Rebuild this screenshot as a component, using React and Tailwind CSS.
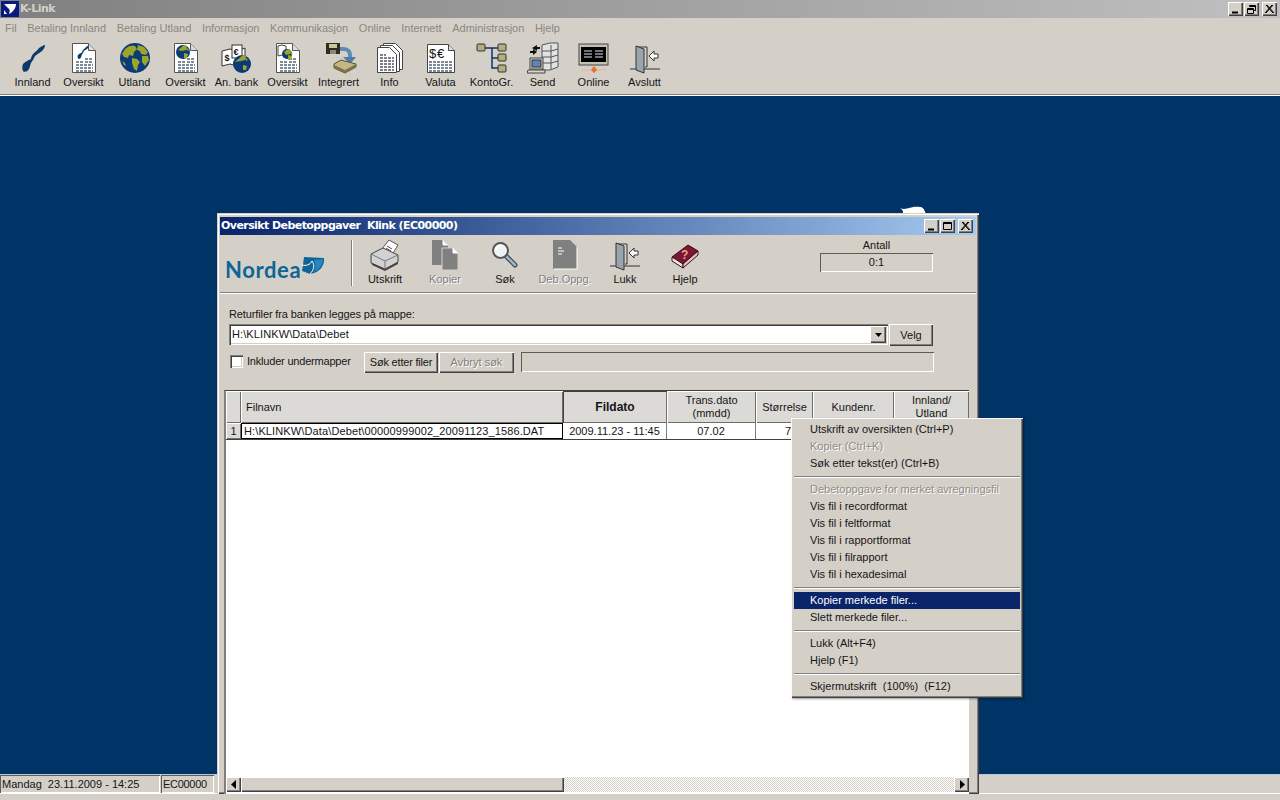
import React from "react";

const raised = "shadow-[inset_1px_1px_0_#fff,inset_-1px_-1px_0_#404040,inset_-2px_-2px_0_#808080]";
const sunken = "shadow-[inset_1px_1px_0_#808080,inset_2px_2px_0_#404040,inset_-1px_-1px_0_#fff,inset_-2px_-2px_0_#d4d0c8]";
const thinSunken = "shadow-[inset_1px_1px_0_#5f5c55,inset_-1px_-1px_0_#fff]";
const headerCell = "bg-[#dcdad6] shadow-[inset_1px_1px_0_#fff,inset_-1px_-1px_0_#6f6d68]";

/* ---------- icons ---------- */
const norwayPath = "M28 3c-2 0-4 2-6 3-1 2-3 3-5 5-2 2-3 4-3 6-3 1-6 3-8 5-1 2-1 5 0 7 2 2 5 0 6-2 1-2 1-4 2-6 1-2 3-4 4-7 2-2 5-3 7-5 2-2 3-4 3-6z";

const Globe = ({ s = 32 }) => (
  <svg width={s} height={s} viewBox="0 0 32 32">
    <circle cx="16" cy="16" r="15" fill="#0a3a78" />
    <path d="M6 7c3-3 6-4 10-3l2 3-3 3-1 4-4-1-1 3-4-1-2-3zM19 3l6 2 4 5-2 3-5-1-1-3-3-1zM13 16l5 1 3 3-2 3-1 6-3-2-2-6zM23 14l6 0 1 4-4 6-3-4zM3 19l3 2 1 3-2-1z" fill="#9aa52a" />
  </svg>
);
const DocBase = ({ children, s = 32 }) => (
  <svg width={s} height={s} viewBox="0 0 32 32">
    <path d="M4.5 1.5h16l7 7v22h-23z" fill="#fff" stroke="#555" />
    <path d="M20.500 1.500v7h7" fill="#ddd" stroke="#555" />
    <path d="M17 17h8M17 20h8M8 20h7M8 23h17M8 26h17M8 29h17" stroke="#7d8a9a" strokeWidth="2" strokeDasharray="3 1" />
    {children}
  </svg>
);
const MiniGlobe = ({ x, y, r }) => (
  <g>
    <circle cx={x} cy={y} r={r} fill="#0a3a78" />
    <path d={`M${x - r + 2} ${y - 2}l${r - 1} ${-r + 2} 3 1 -1 4 -4 1zM${x + 1} ${y + 1}l4 1 -1 4 -3 0zM${x + 3} ${y - r + 2}l3 3 -2 1z`} fill="#9aa52a" />
  </g>
);
const Bill = () => (
  <g>
    <path d="M1 9l8-2 7 2 8-3v15l-8 3-7-2-8 2z" fill="#fff" stroke="#333" />
    <text x="3.500" y="19" fontSize="9" fontWeight="700" fill="#111" fontFamily="Liberation Sans">$</text>
    <rect x="11" y="3" width="10" height="13" fill="#fff" stroke="#333" />
    <text x="12.500" y="13" fontSize="9" fontWeight="700" fill="#111" fontFamily="Liberation Sans">€</text>
  </g>
);
const icons = {
  norway: (
    <svg width="32" height="32" viewBox="0 0 32 32"><path d={norwayPath} fill="#0b3a6b" /></svg>
  ),
  doc1: <DocBase><g transform="translate(7 2) scale(.5)"><path d={norwayPath} fill="#0b3a6b" /></g></DocBase>,
  globe: <Globe />,
  doc2: <DocBase><MiniGlobe x={13} y={10} r={7} /></DocBase>,
  bank: (
    <svg width="32" height="32" viewBox="0 0 32 32">
      <Bill />
      <MiniGlobe x={21} y={22} r={9} />
    </svg>
  ),
  doc3: <DocBase><path d="M6 4l4-1 4 1v10l-4-1-4 1z" fill="#fff" stroke="#444" /><MiniGlobe x={15} y={12} r={5} /></DocBase>,
  integrert: (
    <svg width="36" height="32" viewBox="0 0 36 32">
      <rect x="3" y="1" width="14" height="11" fill="#2d2d24" />
      <rect x="6" y="2" width="8" height="4" fill="#c9c89a" />
      <rect x="7" y="8" width="6" height="4" fill="#8b8a70" />
      <path d="M17 7h4c4 0 6 3 6 6v4" stroke="#5d8db3" strokeWidth="4" fill="none" />
      <path d="M20 15h13l-6 7z" fill="#4c7fa8" />
      <path d="M11 22l7-4 15 4v3l-11 6-11-5z" fill="#c2b887" stroke="#55502f" />
      <path d="M11 26l11 5 11-6v-3l-11 6-11-5z" fill="#7d7548" />
    </svg>
  ),
  info: (
    <svg width="32" height="32" viewBox="0 0 32 32">
      <path d="M9.500 1.500h12l7 7v19h-19z" fill="#fff" stroke="#444" />
      <path d="M6.500 3.500h12l7 7v19h-19z" fill="#fff" stroke="#444" />
      <path d="M3.500 5.500h12l7 7v18h-19z" fill="#fff" stroke="#444" />
      <path d="M6 13h6M6 16h14M6 19h14M6 22h14M6 25h14M6 28h14" stroke="#556" strokeWidth="1.600" strokeDasharray="3 1" />
    </svg>
  ),
  valuta: (
    <svg width="32" height="32" viewBox="0 0 32 32">
      <path d="M2.500 2.500h21l6 6v22h-27z" fill="#fff" stroke="#444" />
      <path d="M23.500 2.500v6h6" fill="#ddd" stroke="#444" />
      <text x="4" y="16" fontSize="13" fill="#111" fontFamily="Liberation Sans">$</text>
      <text x="12" y="16" fontSize="13" fill="#111" fontFamily="Liberation Sans">€</text>
      <path d="M4 20h24M4 23h24M4 26h24M4 29h24" stroke="#7d8a9a" strokeWidth="2" strokeDasharray="3 1" />
    </svg>
  ),
  tree: (
    <svg width="32" height="32" viewBox="0 0 32 32">
      <path d="M14 10h4v16h-4z" fill="#c9d0e6" opacity=".6" />
      <path d="M9 6h16M16 6v20h9M16 16h9" stroke="#12336a" strokeWidth="1.500" fill="none" />
      <rect x="1" y="2" width="8" height="7" rx="1" fill="#b5ad7c" stroke="#333" />
      <rect x="22" y="2" width="8" height="7" rx="1" fill="#b5ad7c" stroke="#333" />
      <rect x="22" y="12" width="8" height="7" rx="1" fill="#b5ad7c" stroke="#333" />
      <rect x="22" y="23" width="8" height="7" rx="1" fill="#b5ad7c" stroke="#333" />
    </svg>
  ),
  send: (
    <svg width="32" height="32" viewBox="0 0 32 32">
      <path d="M15 3l8-2h8v24l-8 3h-8z" fill="#e2e2e2" stroke="#555" />
      <path d="M15 9h9l7-2M15 15h9l7-2M15 21h9l7-2M24 3v24" stroke="#555" fill="none" />
      <path d="M5 6l5-3v2h3v2h-3v2zM10 10l-4 3v-2H3V9h3V7" fill="#111" />
      <rect x="3" y="16" width="13" height="11" fill="#d8d5c9" stroke="#444" />
      <rect x="5" y="18" width="9" height="7" fill="#5c86b5" stroke="#333" />
      <path d="M1 28h17v3H0z" fill="#d8d5c9" stroke="#444" />
    </svg>
  ),
  online: (
    <svg width="32" height="32" viewBox="0 0 32 32">
      <rect x="1" y="2" width="29" height="21" fill="#c4c1b5" stroke="#444" />
      <rect x="3" y="5" width="25" height="15" fill="#000" />
      <path d="M6 9h8M17 9h8M6 12h8M17 12h8M6 15h8M17 15h8" stroke="#dfe6ee" strokeWidth="1" />
      <path d="M3 28h25" stroke="#f4b183" />
      <path d="M16 24l3 4-3 3-3-3z" fill="#e8742a" />
    </svg>
  ),
  door: (
    <svg width="32" height="32" viewBox="0 0 32 32">
      <path d="M7 5h11v20h-2" fill="none" stroke="#333" />
      <path d="M7 4l8 3v24l-8-3z" fill="#9aa4ac" stroke="#333" />
      <path d="M1 27h6M15 27h16" stroke="#333" />
      <path d="M20 14l5-5v3h4v4h-4v3z" fill="#fff" stroke="#333" />
    </svg>
  ),
  printer: (
    <svg width="32" height="32" viewBox="0 0 32 32">
      <path d="M13 10l7-9 9 5-6 10z" fill="#fff" stroke="#555" />
      <path d="M18 7l5 3M17 9l5 3" stroke="#555" />
      <path d="M2 15l12-6 15 7v7l-13 7-14-6z" fill="#d2d2d2" stroke="#444" />
      <path d="M2 15l14 7 13-6M16 22v8" stroke="#777" fill="none" />
      <path d="M3 24l13 6 13-7v2l-13 7-13-6z" fill="#444" />
    </svg>
  ),
  copy: (
    <svg width="32" height="32" viewBox="0 0 32 32">
      <path d="M3 1h11l5 5v20H3z" fill="#808080" />
      <path d="M13 9h11l5 5v17H13z" fill="#808080" stroke="#d4d0c8" />
      <path d="M14 1v5h5M24 9v5h5" fill="#fff" stroke="#fff" />
    </svg>
  ),
  search: (
    <svg width="32" height="32" viewBox="0 0 32 32">
      <path d="M17 17l9 9" stroke="#3c4a56" strokeWidth="5" strokeLinecap="round" />
      <path d="M17 17l9 9" stroke="#9fb6c8" strokeWidth="2.500" strokeLinecap="round" />
      <circle cx="11.500" cy="11.500" r="7.500" fill="#eef3f6" stroke="#555" strokeWidth="2" />
      <path d="M7 11a4.500 4.500 0 0 1 4.500-4.500" stroke="#fff" strokeWidth="2" fill="none" />
    </svg>
  ),
  debdoc: (
    <svg width="32" height="32" viewBox="0 0 32 32">
      <path d="M4 1h17l7 7v22H4z" fill="#808080" />
      <path d="M9 9h4M9 12h6M9 15h4" stroke="#fff" />
      <path d="M28 8v22H5" stroke="#fff" fill="none" />
    </svg>
  ),
  book: (
    <svg width="32" height="32" viewBox="0 0 32 32">
      <path d="M3 18L19 6l10 6-15 13z" fill="#7a1734" stroke="#3d0a1a" />
      <path d="M3 18l11 7v4L3 22z" fill="#f3e6dc" stroke="#3d0a1a" />
      <path d="M14 25l15-13v4L14 29z" fill="#dcc6c0" stroke="#3d0a1a" />
      <text x="12" y="20" fontSize="12" fontWeight="700" fill="#eaa08e" fontFamily="Liberation Sans">?</text>
    </svg>
  ),
};

const BigTool = ({ icon, label }) => (
  <div className="w-[51px] flex flex-col items-center">
    <div className="h-8 w-8">{icons[icon]}</div>
    <span className="mt-[2px] whitespace-nowrap leading-[13px]">{label}</span>
  </div>
);

const WinTool = ({ icon, label, off }) => (
  <div className="w-[60px] flex flex-col items-center">
    <div className="h-8 w-8">{icons[icon]}</div>
    <span className={`mt-[2px] whitespace-nowrap leading-[13px] ${off ? "text-[#808080] [text-shadow:1px_1px_0_#fff]" : ""}`}>{label}</span>
  </div>
);

const CapBtn = ({ kind, w = "w-[15px]" }) => (
  <div className={`${w} h-[14px] bg-[#d4d0c8] ${raised} flex items-center justify-center shrink-0`}>
    <svg width="11" height="10" viewBox="0 0 11 10" fill="none" stroke="#000">
      {kind === "min" && <path d="M2 8.500h6" strokeWidth="2" />}
      {kind === "max" && <path d="M1.500 1.500h8v7h-8zM1.500 2.500h8" />}
      {kind === "restore" && <path d="M3.500 2.500v-1h6v5h-2M3.500 2.500h6M1.500 4.500h6v5h-6zM1.500 5.500h6" />}
      {kind === "close" && <path d="M2 1l7 8M9 1L2 9M3 1l7 8M8 1L1 9" strokeWidth="1" />}
    </svg>
  </div>
);

const Btn = ({ children, className = "", off }) => (
  <div className={`bg-[#d4d0c8] ${raised} flex items-center justify-center ${off ? "text-[#808080] [text-shadow:1px_1px_0_#fff]" : ""} ${className}`}>
    {children}
  </div>
);

const Arrow = ({ dir }) => (
  <svg width="6" height="9" viewBox="0 0 6 9">
    <path d={dir === "l" ? "M5 0v9L0 4.500z" : "M1 0v9l5-4.500z"} fill="#000" />
  </svg>
);

const menuNames = ["Fil", "Betaling Innland", "Betaling Utland", "Informasjon", "Kommunikasjon", "Online", "Internett", "Administrasjon", "Hjelp"];

const tools = [
  ["norway", "Innland"], ["doc1", "Oversikt"], ["globe", "Utland"], ["doc2", "Oversikt"], ["bank", "An. bank"],
  ["doc3", "Oversikt"], ["integrert", "Integrert"], ["info", "Info"], ["valuta", "Valuta"], ["tree", "KontoGr."],
  ["send", "Send"], ["online", "Online"], ["door", "Avslutt"],
];

const columns = [
  { label: "Filnavn", w: "w-[322px]", left: true },
  { label: "Fildato", w: "w-[104px]", bold: true },
  { label: "Trans.dato", sub: "(mmdd)", w: "w-[89px]" },
  { label: "Størrelse", w: "w-[57px]" },
  { label: "Kundenr.", w: "w-[81px]" },
  { label: "Innland/", sub: "Utland", w: "w-[75px]" },
];

// null = separator
const contextMenu = [
  { t: "Utskrift av oversikten (Ctrl+P)" },
  { t: "Kopier (Ctrl+K)", off: true },
  { t: "Søk etter tekst(er) (Ctrl+B)" },
  null,
  { t: "Debetoppgave for merket avregningsfil", off: true },
  { t: "Vis fil i recordformat" },
  { t: "Vis fil i feltformat" },
  { t: "Vis fil i rapportformat" },
  { t: "Vis fil i filrapport" },
  { t: "Vis fil i hexadesimal" },
  null,
  { t: "Kopier merkede filer...", active: true },
  { t: "Slett merkede filer..." },
  null,
  { t: "Lukk (Alt+F4)" },
  { t: "Hjelp (F1)" },
  null,
  { t: "Skjermutskrift  (100%)  (F12)" },
];

function ChildWindow() {
  return (
    <div className="absolute left-[217px] top-[213px] w-[762px] h-[581px] bg-[#d4d0c8] shadow-[inset_1px_1px_0_#d4d0c8,inset_2px_2px_0_#fff,inset_-1px_-1px_0_#404040,inset_-2px_-2px_0_#808080] pt-[4px] pl-[3px] pr-[3px] flex flex-col overflow-hidden">
      {/* title */}
      <div className="h-[18px] shrink-0 bg-gradient-to-r from-[#0a246a] to-[#a6caf0] flex items-center pl-[1px] pr-[3px]">
        <span className="flex-1 pt-[1px] text-white font-bold text-[11px] whitespace-pre font-['DejaVu_Sans',sans-serif] tracking-[-0.57px]">Oversikt Debetoppgaver  Klink (EC00000)</span>
        <CapBtn kind="min" />
        <div className="w-[1px]" />
        <CapBtn kind="max" />
        <div className="w-[3px]" />
        <CapBtn kind="close" />
      </div>

      {/* toolbar */}
      <div className="h-[58px] shrink-0 flex border-b border-b-[#808080] shadow-[0_1px_0_#fff] relative">
        <div className="w-[128px] flex items-center pl-[5px] pt-[13px] shrink-0">
          <span className="text-[#0e6596] font-bold text-[22px] leading-none font-['Lato',sans-serif] tracking-[0.6px]">Nordea</span>
          <svg width="23" height="17" viewBox="0 0 23 17" className="mb-[10px] ml-[1px] shrink-0">
            <path d="M2 0l20 1c1 8-5 15-14 16L0 14l1-6z" fill="#0e6596" />
            <path d="M12 3l9-1c0 6-4 11-9 13 2-4 2-8 0-12z" fill="#2a86c0" />
            <path d="M0 8c4 1 8 0 10-4 3 4 2 9-2 13" stroke="#fff" strokeWidth="1" fill="none" />
          </svg>
        </div>
        <div className="w-[2px] h-[46px] mt-[5px] border-l border-l-[#808080] border-r border-r-white ml-[3px] mr-[2px]" />
        <div className="flex pt-[4px]">
          <WinTool icon="printer" label="Utskrift" />
          <WinTool icon="copy" label="Kopier" off />
          <WinTool icon="search" label="Søk" />
          <WinTool icon="debdoc" label="Deb.Oppg." off />
          <WinTool icon="door" label="Lukk" />
          <WinTool icon="book" label="Hjelp" />
        </div>
        <div className="ml-[105px] w-[113px] pt-[4px] flex flex-col items-center">
          <span className="leading-[13px]">Antall</span>
          <div className={`w-full h-[19px] mt-[1px] ${thinSunken} flex items-center justify-center`}>0:1</div>
        </div>
      </div>

      {/* folder + search */}
      <div className="pl-[9px] pt-[15px] shrink-0">
        <div className="leading-[13px] tracking-[-0.12px]">Returfiler fra banken legges på mappe:</div>
        <div className="flex mt-[3px] h-[21px]">
          <div className={`w-[659px] bg-white ${sunken} flex items-center justify-between pl-[3px] pr-[2px]`}>
            <span className="tracking-[0.1px]">H:\KLINKW\Data\Debet</span>
            <Btn className="w-[16px] h-[17px]">
              <svg width="7" height="4" viewBox="0 0 7 4"><path d="M0 0h7L3.500 4z" fill="#000" /></svg>
            </Btn>
          </div>
          <Btn className="w-[44px] ml-[1px] h-[22px]">Velg</Btn>
        </div>
        <div className="flex items-center mt-[6px] h-[22px]">
          <div className={`w-[13px] h-[13px] bg-white ${sunken} ml-[1px] mb-[2px] shrink-0`} />
          <span className="ml-[4px] mb-[2px] w-[117px] whitespace-nowrap tracking-[-0.2px]">Inkluder undermapper</span>
          <Btn className="w-[74px] h-[21px] tracking-[-0.2px]">Søk etter filer</Btn>
          <Btn className="w-[75px] h-[21px] ml-[1px]" off>Avbryt søk</Btn>
          <div className={`w-[413px] h-[20px] ml-[7px] ${thinSunken}`} />
        </div>
      </div>

      {/* grid */}
      <div className="ml-[4px] w-[745px] mt-[17px] flex-1 flex flex-col bg-white border-t border-t-[#404040] border-l-2 border-l-[#808080] min-h-0">
        <div className="flex h-[32px] shrink-0">
          <div className={`w-[15px] ${headerCell}`} />
          {columns.map((c) => (
            <div
              key={c.label}
              className={`${c.w} ${c.bold ? "bg-[#dcdad6] shadow-[inset_1px_1px_0_#404040,inset_-1px_-1px_0_#6f6d68] font-bold text-[12px]" : headerCell} flex flex-col justify-center leading-[13px] whitespace-nowrap ${c.left ? "pl-[5px]" : "items-center"}`}
            >
              <span>{c.label}</span>
              {c.sub && <span>{c.sub}</span>}
            </div>
          ))}
        </div>
        <div className="flex h-[17px] shrink-0 border-b border-b-[#404040]">
          <div className={`w-[15px] ${headerCell} flex items-center justify-center`}>1</div>
          <div className="w-[322px] border border-black flex items-center pl-[2px] whitespace-nowrap tracking-[0.12px]">H:\KLINKW\Data\Debet\00000999002_20091123_1586.DAT</div>
          <div className="w-[104px] border-r border-r-[#808080] flex items-center justify-center">2009.11.23 - 11:45</div>
          <div className="w-[89px] border-r border-r-[#808080] flex items-center justify-center">07.02</div>
          <div className="w-[57px] flex items-center pl-[29px]">7</div>
        </div>
        <div className="flex-1" />
        {/* horizontal scrollbar */}
        <div className="h-[16px] shrink-0 mb-[1px] flex">
          <Btn className="w-[15px] h-[15px]"><Arrow dir="l" /></Btn>
          <div className={`w-[323px] h-[15px] bg-[#d4d0c8] ${raised}`} />
          <div className="flex-1 h-[15px] bg-[repeating-conic-gradient(#d4d0c8_0_25%,#fff_0_50%)] bg-[length:2px_2px]" />
          <Btn className="w-[15px] h-[15px]"><Arrow dir="r" /></Btn>
        </div>
      </div>
    </div>
  );
}

function ContextMenu() {
  return (
    <div className={`absolute left-[791px] top-[418px] w-[232px] bg-[#d4d0c8] py-[3px] px-[3px] shadow-[inset_1px_1px_0_#fff,inset_-1px_-1px_0_#404040,inset_-2px_-2px_0_#808080,1px_1px_2px_rgba(0,0,0,.4)]`}>
      {contextMenu.map((m, i) =>
        m === null ? (
          <div key={i} className="h-[9px] flex flex-col justify-center">
            <div className="h-[1px] bg-[#808080] shadow-[0_1px_0_#fff]" />
          </div>
        ) : (
          <div
            key={i}
            className={`h-[17px] flex items-center pl-[16px] whitespace-pre ${m.active ? "bg-[#0a246a] text-white" : ""} ${m.off ? "text-[#8f8c85] [text-shadow:1px_1px_0_#fff]" : ""}`}
          >
            {m.t}
          </div>
        )
      )}
    </div>
  );
}

export default function App() {
  return (
    <div className="relative w-[1280px] h-[800px] overflow-hidden flex flex-col bg-[#d4d0c8] text-[#151515] text-[11px] font-['Liberation_Sans',Arial,sans-serif]">
      {/* app title bar */}
      <div className="h-[18px] shrink-0 bg-gradient-to-r from-[#808080] to-[#c0c0c0] flex items-center pr-[3px]">
        <div className="w-[18px] h-[16px] bg-[#0a1a80] flex items-center justify-center ml-[1px]">
          <svg width="14" height="12" viewBox="0 0 14 12">
            <path d="M1 1h12c0 4-3 8-7 10 1-3 1-5-1-6zM1 7l3 4H1z" fill="#fff" />
          </svg>
        </div>
        <span className="ml-[1px] flex-1 font-bold text-[#d4d0c8] text-[11px] font-['DejaVu_Sans',sans-serif] tracking-[-0.5px]">K-Link</span>
        <CapBtn kind="min" />
        <div className="w-[1px]" />
        <CapBtn kind="restore" />
        <div className="w-[3px]" />
        <CapBtn kind="close" />
      </div>

      {/* menu bar */}
      <div className="h-[20px] shrink-0 flex items-center pl-[5px] gap-[10.6px] text-[#8a8780]">
        {menuNames.map((n) => (
          <span key={n} className="whitespace-nowrap">{n}</span>
        ))}
      </div>

      {/* main toolbar */}
      <div className="h-[57px] shrink-0 flex pl-[7px] pt-[4px] border-b border-b-[#808080] shadow-[0_1px_0_#fff]">
        {tools.map(([icon, label], i) => (
          <BigTool key={i} icon={icon} label={label} />
        ))}
      </div>

      {/* desktop */}
      <div className="flex-1 bg-[#003366] min-h-0 mt-[1px]" />

      {/* status bar */}
      <div className="h-[20px] shrink-0 flex border-t border-t-[#b9c4d8] border-b border-b-white">
        <div className={`w-[160px] ${thinSunken} flex items-center pl-[2px] pt-[1px] whitespace-pre`}>Mandag  23.11.2009 - 14:25</div>
        <div className={`w-[53px] ml-[1px] ${thinSunken} flex items-center pl-[2px] pt-[1px] tracking-[-0.3px]`}>EC00000</div>
      </div>
      <div className="h-[6px] shrink-0" />

      {/* white corner peeking out behind the child window */}
      <svg width="28" height="8" viewBox="0 0 28 8" className="absolute left-[900px] top-[206px]">
        <path d="M0 2c6 3 10-2 20-1 3 0 4 2 6 7H2C4 6 3 4 0 2z" fill="#fff" />
      </svg>

      <ChildWindow />
      <ContextMenu />
    </div>
  );
}
